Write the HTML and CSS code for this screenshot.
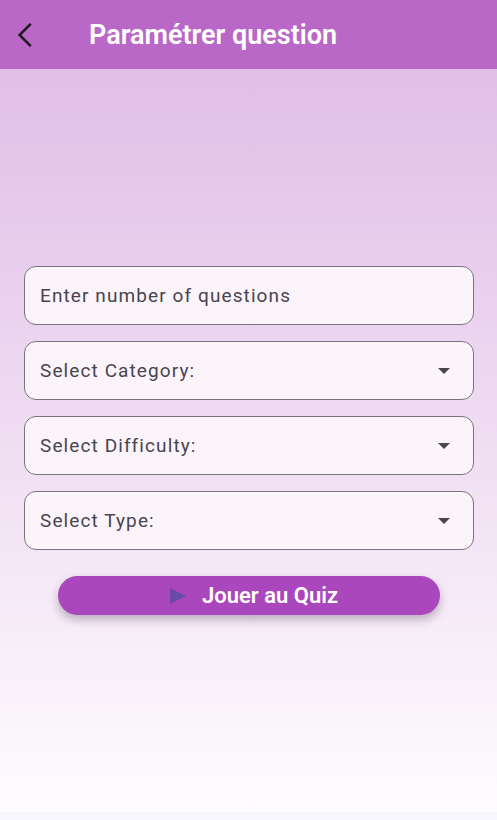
FILE: index.html
```html
<!DOCTYPE html>
<html lang="fr">
<head>
<meta charset="utf-8">
<title>Paramétrer question</title>
<link rel="stylesheet" href="styles.css">
</head>
<body>
<div class="screen">
  <header class="appbar">
    <button class="back" aria-label="Retour">
      <svg width="24" height="24" viewBox="0 0 24 24"><path d="M16.8 0.8 L5.6 12 L16.8 23.2" fill="none" stroke="#1d1b20" stroke-width="2.5"/></svg>
    </button>
    <h1 class="title">Paramétrer question</h1>
  </header>
  <main class="content">
    <div class="form">
      <div class="field"><span class="label">Enter number of questions</span></div>
      <div class="field select"><span class="label">Select Category:</span><span class="caret"></span></div>
      <div class="field select"><span class="label">Select Difficulty:</span><span class="caret"></span></div>
      <div class="field select"><span class="label">Select Type:</span><span class="caret"></span></div>
      <button class="play">
        <svg width="16" height="16" viewBox="0 0 16 16"><path d="M0 0 L16 8 L0 16 Z" fill="#6a4aa8"/></svg>
        <span>Jouer au Quiz</span>
      </button>
    </div>
  </main>
  <div class="navstrip"></div>
</div>
</body>
</html>
```
FILE: styles.css
```css
* { box-sizing: border-box; }
html, body { margin: 0; padding: 0; }
body { font-family: Roboto, "Noto Sans", sans-serif; }
.screen {
  width: 497px;
  height: 820px;
  display: flex;
  flex-direction: column;
  overflow: hidden;
}
.appbar {
  height: 69px;
  flex: none;
  background: #b968c7;
  display: flex;
  align-items: center;
  padding-left: 14px;
}
.back {
  width: 24px;
  height: 24px;
  padding: 0;
  border: 0;
  background: none;
  display: flex;
}
.title {
  margin: 0 0 0 51px;
  color: #fff;
  font-size: 27px;
  font-weight: 600;
  letter-spacing: 0;
}
.content {
  flex: 1;
  background: linear-gradient(to bottom, #e1bee7 0%, #fefcfe 100%);
  display: flex;
  flex-direction: column;
  padding: 197px 23px 0 24px;
}
.form {
  display: flex;
  flex-direction: column;
  gap: 16px;
}
.field {
  height: 59px;
  border: 1px solid #79747e;
  border-radius: 12px;
  background: #fbf4fb;
  display: flex;
  align-items: center;
  justify-content: space-between;
  padding: 0 23px 0 15px;
}
.label {
  color: #49454f;
  font-size: 19px;
  letter-spacing: 1.1px;
}
.caret {
  width: 0;
  height: 0;
  border-left: 6px solid transparent;
  border-right: 6px solid transparent;
  border-top: 6px solid #49454f;
  margin-top: 1px;
}
.play {
  align-self: center;
  margin: 10px 0 0 0;
  width: 382px;
  height: 39px;
  border: 0;
  border-radius: 20px;
  background: #ab47bc;
  color: #fff;
  font-family: Roboto, sans-serif;
  font-size: 22px;
  font-weight: 600;
  letter-spacing: 0;
  display: flex;
  align-items: center;
  justify-content: center;
  gap: 16px;
  box-shadow: 0 5px 10px rgba(60, 30, 70, 0.3);
  padding: 0 0 0 10px;
}
.navstrip {
  height: 8px;
  flex: none;
  background: #f8f7fd;
}
```
